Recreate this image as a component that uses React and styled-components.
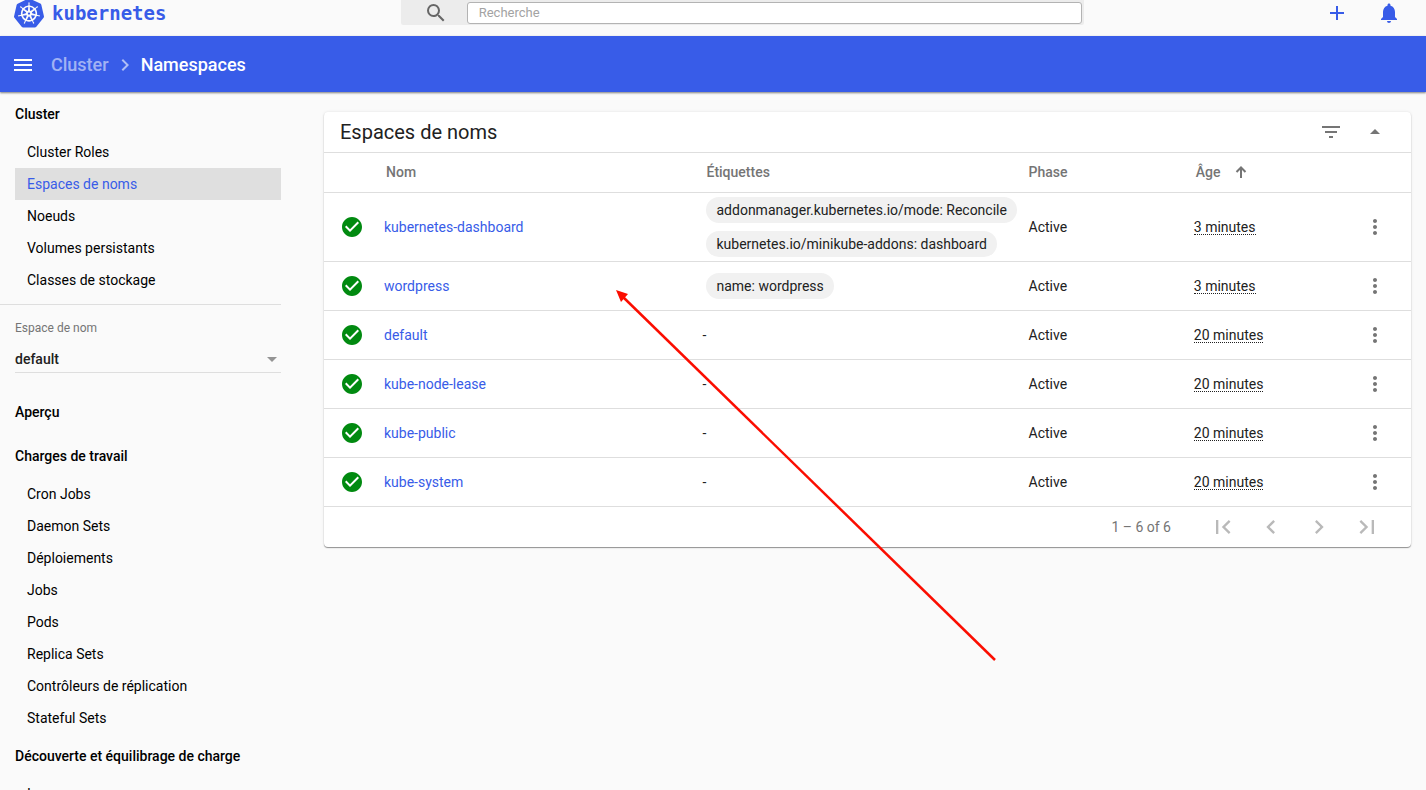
import React from "react";
import styled, { createGlobalStyle } from "styled-components";
import {
  MdMenu, MdChevronRight, MdSearch, MdAdd, MdNotifications, MdFilterList,
  MdArrowDropUp, MdArrowDropDown, MdCheckCircle, MdMoreVert,
  MdFirstPage, MdLastPage, MdNavigateBefore, MdNavigateNext,
} from "react-icons/md";
import { SiKubernetes } from "react-icons/si";

const BLUE = "#385ce8";
const LINE = "#dedede";

const GlobalStyle = createGlobalStyle`
  *, *::before, *::after { box-sizing: border-box; }
  body {
    margin: 0;
    background: #fafafa;
    color: #000;
    font: 400 14px/20px Roboto, "Liberation Sans", sans-serif;
  }
  button, input, select { font: inherit; }
  a { color: inherit; text-decoration: none; }
`;

const Shell = styled.div`
  position: relative;
  display: flex;
  flex-direction: column;
  height: 100vh;
  overflow: hidden;
`;

const TopBar = styled.header`
  display: flex;
  align-items: flex-start;
  flex: none;
  height: 36px;
  overflow: hidden;
`;

const Brand = styled.a`
  display: flex;
  align-items: center;
  gap: 8px;
  width: 28.1%;
  height: 25px;
  padding-left: 14px;
  color: ${BLUE};
  svg { flex: none; }
`;

const Wordmark = styled.span`
  font: 700 19px/24px "DejaVu Sans Mono", monospace;
`;

const SearchBox = styled.form`
  display: flex;
  align-items: center;
  flex: 1;
  height: 25px;
  padding-right: 2px;
  border-radius: 0 0 2px 2px;
  background: #ececec;
`;

const SearchLabel = styled.label`
  display: flex;
  justify-content: center;
  flex: none;
  width: 66px;
  padding-left: 4px;
  color: #666;
`;

const SearchInput = styled.input`
  flex: 1;
  min-width: 0;
  height: 22px;
  padding: 0 11px;
  border: 1px solid #b3b3b3;
  border-radius: 3px;
  background: #fff;
  font-size: 13px;
  &::placeholder { color: #a3a3a3; opacity: 1; }
`;

const TopActions = styled.div`
  display: flex;
  justify-content: flex-end;
  gap: 28px;
  width: 24%;
  padding-right: 25px;
`;

const IconButton = styled.button`
  display: inline-flex;
  align-items: center;
  justify-content: center;
  flex: none;
  width: 24px;
  height: ${(p) => p.$height || 24}px;
  padding: 0;
  border: 0;
  background: none;
  color: ${(p) => p.$color || "#757575"};
  vertical-align: middle;
  svg { flex: none; }
`;

const Toolbar = styled.nav`
  position: relative;
  display: flex;
  align-items: center;
  flex: none;
  height: 56px;
  padding: 2px 11px 0;
  background: ${BLUE};
  box-shadow: 0 1px 2px rgba(0, 0, 0, 0.5);
  color: #fff;
  font-size: 18px;
  font-weight: 500;
`;

const Crumb = styled.a`
  margin-left: 16px;
  color: rgba(255, 255, 255, 0.54);
`;

const CrumbArrow = styled(MdChevronRight)`
  margin: 0 4px;
  opacity: 0.6;
`;

const Body = styled.div`
  display: flex;
  flex: 1;
  min-height: 0;
`;

const Sidebar = styled.nav`
  flex: none;
  width: 281px;
  padding-top: 6px;
  overflow: hidden;
`;

const GroupTitle = styled.a`
  display: block;
  padding-left: 15px;
  margin-bottom: ${(p) => (p.$gap ? 12 : 6)}px;
  font-weight: 500;
  line-height: 32px;
`;

const Item = styled.a`
  display: block;
  margin-left: 15px;
  padding-left: 12px;
  line-height: 32px;
  color: ${(p) => (p.$active ? BLUE : "#000")};
  background: ${(p) => (p.$active ? "#dfdfdf" : "none")};
`;

const Items = styled.div`
  margin-bottom: 6px;
`;

const NamespaceField = styled.div`
  margin-top: 8px;
  padding: 13px 0 23px 15px;
  border-top: 1px solid ${LINE};
`;

const FieldLabel = styled.label`
  display: block;
  color: #757575;
  font-size: 12px;
`;

const SelectWrap = styled.div`
  display: flex;
  align-items: center;
  height: 35px;
  padding-top: 8px;
  border-bottom: 1px solid ${LINE};
`;

const Select = styled.select`
  flex: 1;
  appearance: none;
  padding: 0;
  border: 0;
  background: none;
  color: #212121;
  font-weight: 500;
`;

const SelectArrow = styled(MdArrowDropDown)`
  margin-right: -3px;
  color: #949494;
  pointer-events: none;
`;

const Main = styled.main`
  flex: 1;
  min-width: 0;
  padding: 20px 15px 20px 43px;
`;

const Card = styled.section`
  border-radius: 4px;
  background: #fff;
  box-shadow: 0 1px 1px rgba(0, 0, 0, 0.4), 0 0 3px rgba(0, 0, 0, 0.1);
`;

const CardHeader = styled.div`
  display: flex;
  align-items: center;
  gap: 20px;
  height: 41px;
  padding: 0 24px 0 16px;
  border-bottom: 1px solid ${LINE};
`;

const CardTitle = styled.h2`
  flex: 1;
  margin: 0;
  color: #212121;
  font-size: 20px;
  font-weight: 400;
`;

const Table = styled.table`
  width: 100%;
  table-layout: fixed;
  border-collapse: separate;
  border-spacing: 0;
`;

const Col = styled.col`
  width: ${(p) => p.$width};
`;

const HeadCell = styled.th`
  height: 40px;
  padding: 0 0 2px ${(p) => p.$pad || 0}px;
  border-bottom: 1px solid ${LINE};
  color: #757575;
  font-weight: 500;
  text-align: left;
`;

const SortButton = styled.button`
  display: flex;
  align-items: center;
  gap: 14px;
  padding: 0;
  border: 0;
  background: none;
  color: inherit;
`;

const Cell = styled.td`
  height: 49px;
  padding: 0;
  border-bottom: 1px solid ${LINE};
  color: #212121;
  text-align: ${(p) => (p.$center ? "center" : "left")};
  svg { vertical-align: middle; }
`;

const StatusCell = styled(Cell)`
  padding-left: 16px;
  color: #018a10;
`;

const NameLink = styled.a`
  color: ${BLUE};
`;

const Chips = styled.div`
  display: flex;
  flex-direction: column;
  align-items: flex-start;
  gap: 8px;
  padding: 4px;
`;

const Chip = styled.span`
  padding: 3px 10px;
  border-radius: 13px;
  background: #f1f1f1;
  white-space: nowrap;
`;

const Age = styled.span`
  display: inline-block;
  border-bottom: 1px dotted #212121;
  line-height: 13px;
`;

const Paginator = styled.div`
  display: flex;
  align-items: center;
  justify-content: flex-end;
  gap: 24px;
  height: 40px;
  padding-right: 32px;
  color: #757575;
`;

const Range = styled.span`
  margin-right: 16px;
`;

const Pointer = styled.svg`
  position: absolute;
  left: 610px;
  top: 285px;
  pointer-events: none;
`;

const clusterItems = ["Cluster Roles", "Espaces de noms", "Noeuds", "Volumes persistants", "Classes de stockage"];
const workloadItems = [
  "Cron Jobs", "Daemon Sets", "Déploiements", "Jobs", "Pods",
  "Replica Sets", "Contrôleurs de réplication", "Stateful Sets",
];

const namespaces = [
  {
    name: "kubernetes-dashboard",
    labels: ["addonmanager.kubernetes.io/mode: Reconcile", "kubernetes.io/minikube-addons: dashboard"],
    age: "3 minutes",
  },
  { name: "wordpress", labels: ["name: wordpress"], age: "3 minutes" },
  { name: "default", labels: [], age: "20 minutes" },
  { name: "kube-node-lease", labels: [], age: "20 minutes" },
  { name: "kube-public", labels: [], age: "20 minutes" },
  { name: "kube-system", labels: [], age: "20 minutes" },
];

const pages = [
  ["Première page", MdFirstPage],
  ["Page précédente", MdNavigateBefore],
  ["Page suivante", MdNavigateNext],
  ["Dernière page", MdLastPage],
];

function SortArrow() {
  return (
    <svg width="12" height="12" viewBox="0 0 12 12" fill="none" stroke="currentColor" strokeWidth="2" aria-hidden="true">
      <path d="M6 12 V2 M1.5 6 L6 1.5 L10.5 6" />
    </svg>
  );
}

function NavItems({ items, active }) {
  return (
    <Items>
      {items.map((item) => (
        <Item key={item} href="#" $active={item === active}>{item}</Item>
      ))}
    </Items>
  );
}

function NamespaceRow({ name, labels, age }) {
  return (
    <tr>
      <StatusCell><MdCheckCircle size={24} /></StatusCell>
      <Cell><NameLink href="#">{name}</NameLink></Cell>
      <Cell>
        {labels.length ? (
          <Chips>{labels.map((label) => <Chip key={label}>{label}</Chip>)}</Chips>
        ) : "-"}
      </Cell>
      <Cell>Active</Cell>
      <Cell><Age>{age}</Age></Cell>
      <Cell $center>
        <IconButton aria-label={`Actions ${name}`}><MdMoreVert size={24} /></IconButton>
      </Cell>
    </tr>
  );
}

export default function App() {
  return (
    <Shell>
      <GlobalStyle />
      <TopBar>
        <Brand href="#">
          <SiKubernetes size={30} />
          <Wordmark>kubernetes</Wordmark>
        </Brand>
        <SearchBox>
          <SearchLabel htmlFor="search" aria-label="Recherche"><MdSearch size={24} /></SearchLabel>
          <SearchInput id="search" type="search" placeholder="Recherche" />
        </SearchBox>
        <TopActions>
          <IconButton aria-label="Créer" $color={BLUE} $height={26}><MdAdd size={24} /></IconButton>
          <IconButton aria-label="Notifications" $color={BLUE} $height={26}><MdNotifications size={24} /></IconButton>
        </TopActions>
      </TopBar>
      <Toolbar>
        <IconButton aria-label="Menu" $color="#fff"><MdMenu size={24} /></IconButton>
        <Crumb href="#">Cluster</Crumb>
        <CrumbArrow size={24} />
        <span>Namespaces</span>
      </Toolbar>
      <Body>
        <Sidebar>
          <GroupTitle href="#">Cluster</GroupTitle>
          <NavItems items={clusterItems} active="Espaces de noms" />
          <NamespaceField>
            <FieldLabel htmlFor="namespace">Espace de nom</FieldLabel>
            <SelectWrap>
              <Select id="namespace" defaultValue="default">
                <option>default</option>
              </Select>
              <SelectArrow size={24} />
            </SelectWrap>
          </NamespaceField>
          <GroupTitle href="#" $gap>Aperçu</GroupTitle>
          <GroupTitle href="#">Charges de travail</GroupTitle>
          <NavItems items={workloadItems} />
          <GroupTitle href="#">Découverte et équilibrage de charge</GroupTitle>
          <NavItems items={["Ingresses"]} />
        </Sidebar>
        <Main>
          <Card>
            <CardHeader>
              <CardTitle>Espaces de noms</CardTitle>
              <IconButton aria-label="Filtrer"><MdFilterList size={24} /></IconButton>
              <IconButton aria-label="Réduire"><MdArrowDropUp size={24} /></IconButton>
            </CardHeader>
            <Table>
              <colgroup>
                <Col $width="60px" />
                <Col $width="29.3%" />
                <Col $width="30%" />
                <Col $width="15.2%" />
                <Col />
                <Col $width="72px" />
              </colgroup>
              <thead>
                <tr>
                  <HeadCell aria-label="État" />
                  <HeadCell $pad={2}>Nom</HeadCell>
                  <HeadCell $pad={4}>Étiquettes</HeadCell>
                  <HeadCell>Phase</HeadCell>
                  <HeadCell $pad={2}>
                    <SortButton>Âge <SortArrow /></SortButton>
                  </HeadCell>
                  <HeadCell aria-label="Actions" />
                </tr>
              </thead>
              <tbody>
                {namespaces.map((ns) => <NamespaceRow key={ns.name} {...ns} />)}
              </tbody>
            </Table>
            <Paginator>
              <Range>1 – 6 of 6</Range>
              {pages.map(([label, Icon]) => (
                <IconButton key={label} aria-label={label} $color="#b9b9b9"><Icon size={28} /></IconButton>
              ))}
            </Paginator>
          </Card>
        </Main>
      </Body>
      <Pointer width="390" height="380" viewBox="0 0 390 380" aria-hidden="true">
        <path d="M12 11 L385 375" stroke="#fb0d00" strokeWidth="2.5" />
        <path d="M6 5 L18 9 L11 17 Z" fill="#fb0d00" />
      </Pointer>
    </Shell>
  );
}
